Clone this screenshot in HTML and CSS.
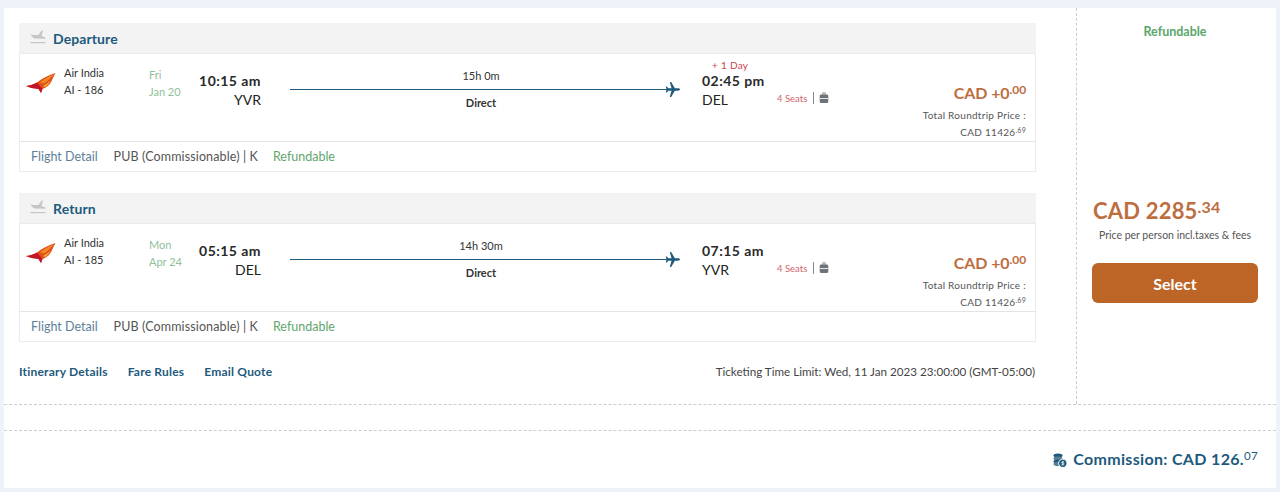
FILE: index.html
```html
<!DOCTYPE html>
<html lang="en">
<head>
<meta charset="utf-8">
<title>Flight result</title>
<link rel="stylesheet" href="styles.css">
</head>
<body>
<svg class="defs" width="0" height="0" aria-hidden="true">
  <symbol id="landing" viewBox="0 0 16 14">
    <path d="M.5 4.500 3.500 5H8.500L11.500.5 13 .8 11.500 6 15 7.200c.8.300.8 1.600-.3 1.600L5 8.500C3 8 1.500 6 .5 4.500z" fill="#c6c6c6"/>
    <rect x=".5" y="12" width="15" height="1.200" fill="#c6c6c6"/>
  </symbol>
  <symbol id="tail" viewBox="0 0 30 20">
    <path d="M0 13C4 12.500 8 11.500 11 9.500 16 5.500 23 2 29.500 0 27.500 3 26.500 7 24.500 10 22.500 13 19.500 15 16.500 16L15 20 12.500 16C8 15.500 3 14.500 0 13z" fill="#e2501f"/>
    <path d="M0 13C4 12.500 8 11.500 11 9.500L16.500 16 15 20 12.500 16C8 15.500 3 14.500 0 13z" fill="#c3152a"/>
    <path d="M14 9.500C18 6 23.500 3 28 1 25 4 23 7 19.500 9.500 18 10.500 16 10.500 14 9.500z" fill="#f08a24"/>
    <path d="M17 13C20 11.500 22.500 9.500 24.500 7.500 23.500 10 21.500 12.500 19 14z" fill="#f5b02c"/>
  </symbol>
  <symbol id="plane" viewBox="0 0 16 16">
    <path d="M15.800 8c0-.7-.9-1.300-2-1.300H10.500L6.600 0H5.100l1.900 6.700H3.500L2 4.800H.8L1.700 8 .8 11.200H2l1.500-1.900h3.500L5.100 16h1.500l3.900-6.700h3.300c1.100 0 2-.6 2-1.300z" fill="#1d5a7d"/>
  </symbol>
  <symbol id="bag" viewBox="0 0 10 12">
    <path d="M3.500.5h3v2h1.200c.9 0 1.600.7 1.600 1.500v5.500c0 .8-.7 1.500-1.600 1.500H2.300c-.9 0-1.600-.7-1.600-1.500V4c0-.8.700-1.500 1.600-1.500h1.200zm.8.800v1.200h1.400V1.300z" fill="#6d7378" fill-rule="evenodd"/>
    <path d="M1 6h8v.8H1z" fill="#fff"/>
  </symbol>
</svg>

<main class="card">
  <div class="top">
    <section class="legs">
      <article class="leg">
        <h2 class="leg-head"><svg class="leg-icon"><use href="#landing"/></svg>Departure</h2>
        <div class="leg-body">
          <svg class="tail"><use href="#tail"/></svg>
          <div class="airline"><span>Air India</span><span>AI - 186</span></div>
          <div class="date"><span>Fri</span><span>Jan 20</span></div>
          <div class="dep"><b>10:15 am</b><span>YVR</span></div>
          <div class="route">
            <span class="dur">15h 0m</span>
            <div class="line"><svg class="plane"><use href="#plane"/></svg></div>
            <span class="stops">Direct</span>
          </div>
          <div class="arr"><em>+ 1 Day</em><b>02:45 pm</b><span>DEL</span></div>
          <div class="seats"><span class="seat-count">4 Seats</span><i class="sep"></i><svg class="bag"><use href="#bag"/></svg></div>
          <div class="price">
            <p class="plus">CAD +0<sup>.00</sup></p>
            <p class="total">Total Roundtrip Price :</p>
            <p class="total">CAD 11426<sup>.69</sup></p>
          </div>
        </div>
        <div class="leg-foot"><a href="#">Flight Detail</a><span class="fare">PUB (Commissionable) | K</span><span class="ok">Refundable</span></div>
      </article>

      <article class="leg">
        <h2 class="leg-head"><svg class="leg-icon"><use href="#landing"/></svg>Return</h2>
        <div class="leg-body">
          <svg class="tail"><use href="#tail"/></svg>
          <div class="airline"><span>Air India</span><span>AI - 185</span></div>
          <div class="date"><span>Mon</span><span>Apr 24</span></div>
          <div class="dep"><b>05:15 am</b><span>DEL</span></div>
          <div class="route">
            <span class="dur">14h 30m</span>
            <div class="line"><svg class="plane"><use href="#plane"/></svg></div>
            <span class="stops">Direct</span>
          </div>
          <div class="arr"><em></em><b>07:15 am</b><span>YVR</span></div>
          <div class="seats"><span class="seat-count">4 Seats</span><i class="sep"></i><svg class="bag"><use href="#bag"/></svg></div>
          <div class="price">
            <p class="plus">CAD +0<sup>.00</sup></p>
            <p class="total">Total Roundtrip Price :</p>
            <p class="total">CAD 11426<sup>.69</sup></p>
          </div>
        </div>
        <div class="leg-foot"><a href="#">Flight Detail</a><span class="fare">PUB (Commissionable) | K</span><span class="ok">Refundable</span></div>
      </article>

      <div class="links">
        <a href="#">Itinerary Details</a><a href="#">Fare Rules</a><a href="#">Email Quote</a>
        <span class="limit">Ticketing Time Limit: Wed, 11 Jan 2023 23:00:00 (GMT-05:00)</span>
      </div>
    </section>

    <aside class="side">
      <p class="refund">Refundable</p>
      <p class="big">CAD 2285<sup>.34</sup></p>
      <p class="per">Price per person incl.taxes &amp; fees</p>
      <button class="select" type="button">Select</button>
    </aside>
  </div>
  <div class="gap"></div>
  <div class="commission">
    <svg class="coins" viewBox="0 0 14 15">
      <ellipse cx="5" cy="2.500" rx="4.500" ry="2" fill="#1d5a7d"/>
      <ellipse cx="5" cy="5.500" rx="4.500" ry="2" fill="#5b7f95"/>
      <ellipse cx="5" cy="8.500" rx="4.500" ry="2" fill="#1d5a7d"/>
      <ellipse cx="5" cy="11" rx="4.500" ry="2" fill="#5b7f95"/>
      <circle cx="9.800" cy="10.300" r="4.200" fill="#1d5a7d" stroke="#fff" stroke-width="1"/>
      <path d="M11.200 8.800H9.300c-.9 0-.9 1.400 0 1.400h1c.9 0 .9 1.500 0 1.500H8.400M9.800 8v4.600" stroke="#fff" stroke-width=".7" fill="none"/>
    </svg>
    <span>Commission: CAD 126.<sup>07</sup></span>
  </div>
</main>
</body>
</html>
```

FILE: styles.css
```css
* { box-sizing: border-box; }
html, body { margin: 0; padding: 0; }
body {
  height: 492px;
  overflow: hidden;
  background: #eef2f9;
  padding: 8px 4px 4px;
  font-family: Lato, "Liberation Sans", sans-serif;
  color: #222;
}
.defs { display: block; height: 0; }
p, h2 { margin: 0; }
a { text-decoration: none; color: inherit; }
sup { line-height: 0; }

.card { width: 1272px; height: 480px; background: #fff; }
.top { display: flex; height: 397px; border-bottom: 1px dashed #ccc; }

.legs { width: 1073px; padding: 15px 40px 0 15px; border-right: 1px dashed #ccc; }
.leg { width: 1017px; margin-bottom: 21px; }
.leg-head {
  display: flex; align-items: center;
  height: 31px; padding: 1px 0 0 11px;
  background: #f3f3f3;
  border-bottom: 1px solid #ebebeb;
  font-size: 14px; font-weight: 700; color: #1d5a7d; letter-spacing: .1px;
}
.leg-icon { width: 16px; height: 14px; margin-right: 7px; margin-top: -3px; }

.leg-body {
  display: flex; align-items: flex-start;
  height: 88px;
  border-left: 1px solid #ececec; border-right: 1px solid #ececec;
  border-bottom: 1px solid #e4e4e4;
}
.tail { width: 30px; height: 20px; margin: 19px 8px 0 6px; flex: none; }
.airline { width: 85px; padding-top: 10px; font-size: 11px; line-height: 17px; display: flex; flex-direction: column; color: #333; flex: none; }
.date { width: 50px; padding-top: 12px; font-size: 11px; line-height: 17px; display: flex; flex-direction: column; color: #8fc09a; flex: none; }
.dep { width: 62px; padding-top: 17px; text-align: right; display: flex; flex-direction: column; flex: none; }
.dep b, .arr b { font-size: 14px; font-weight: 700; line-height: 20px; letter-spacing: .45px; color: #2a2a2a; }
.dep span, .arr span { font-size: 14px; line-height: 18px; color: #222; }
.route { width: 390px; margin-left: 29px; padding-top: 14px; flex: none; display: flex; flex-direction: column; align-items: center; }
.dur { font-size: 11px; line-height: 16px; color: #333; padding-right: 8px; }
.line { width: 100%; height: 1px; background: #1d5a7d; margin: 5px 0 5px; position: relative; }
.plane { position: absolute; right: 0; top: -8px; width: 15px; height: 17px; }
.stops { font-size: 11px; font-weight: 700; line-height: 16px; color: #333; padding-right: 8px; }
.arr { width: 75px; margin-left: 22px; padding-top: 5px; display: flex; flex-direction: column; flex: none; }
.arr em { font-style: normal; font-size: 10px; line-height: 12px; height: 12px; color: #d0404c; padding-left: 10px; letter-spacing: .3px; }
.seats { display: flex; align-items: center; gap: 5px; margin-top: 37px; flex: none; height: 14px; }
.seat-count { font-size: 9.500px; color: #d0646c; margin-right: 1px; }
.sep { width: 1px; height: 12px; background: #888; }
.bag { width: 10px; height: 12px; }
.price { flex: 1; padding: 28px 9px 0 0; text-align: right; }
.plus { font-size: 16px; font-weight: 700; line-height: 22px; color: #bd6e3f; margin-bottom: 3px; letter-spacing: -.1px; }
.plus sup { font-size: 12px; vertical-align: 5px; font-weight: 700; }
.total { font-size: 10px; line-height: 16.500px; color: #555; letter-spacing: .28px; }
.total sup { font-size: 7px; vertical-align: 3px; }

.leg-foot {
  display: flex; align-items: center; gap: 15px;
  height: 30px; padding: 0 0 1px 11px;
  border: 1px solid #ececec; border-top: 0;
  font-size: 12.500px; color: #555;
}
.leg-foot a { color: #5b8199; margin-right: 1px; }
.fare { letter-spacing: .12px; }
.ok { color: #5fa56c; }

.links { display: flex; align-items: center; gap: 20px; width: 1016px; height: 16px; font-size: 12px; font-weight: 700; color: #1d5a7d; letter-spacing: .2px; }
.limit { margin-left: auto; font-size: 11.650px; font-weight: 400; color: #444; letter-spacing: 0; }

.side { flex: 1; display: flex; flex-direction: column; align-items: center; padding: 17px 18px 0 15px; }
.refund { font-size: 12.500px; font-weight: 700; color: #58a76a; line-height: 14px; }
.big { align-self: flex-start; margin: 158px 0 0 1px; font-size: 22px; font-weight: 700; line-height: 28px; color: #bd6e3f; letter-spacing: .2px; }
.big sup { font-size: 16px; vertical-align: 6px; }
.per { font-size: 10.500px; line-height: 14px; color: #555; margin-top: 3px; }
.select {
  width: 100%; height: 40px; margin-top: 21px;
  border: 0; border-radius: 6px;
  background: #bd6527; color: #fff;
  font: 700 16px Lato, "Liberation Sans", sans-serif;
}

.gap { height: 26px; border-bottom: 1px dashed #ccc; }
.commission {
  display: flex; align-items: center; justify-content: flex-end; gap: 6px;
  padding: 18px 18px 0 0;
  font-size: 16px; font-weight: 700; color: #1d5a7d; letter-spacing: .33px;
}
.commission sup { font-size: 11.500px; vertical-align: 5px; font-weight: 400; }
.coins { width: 14px; height: 15px; margin-top: 3px; }
```
